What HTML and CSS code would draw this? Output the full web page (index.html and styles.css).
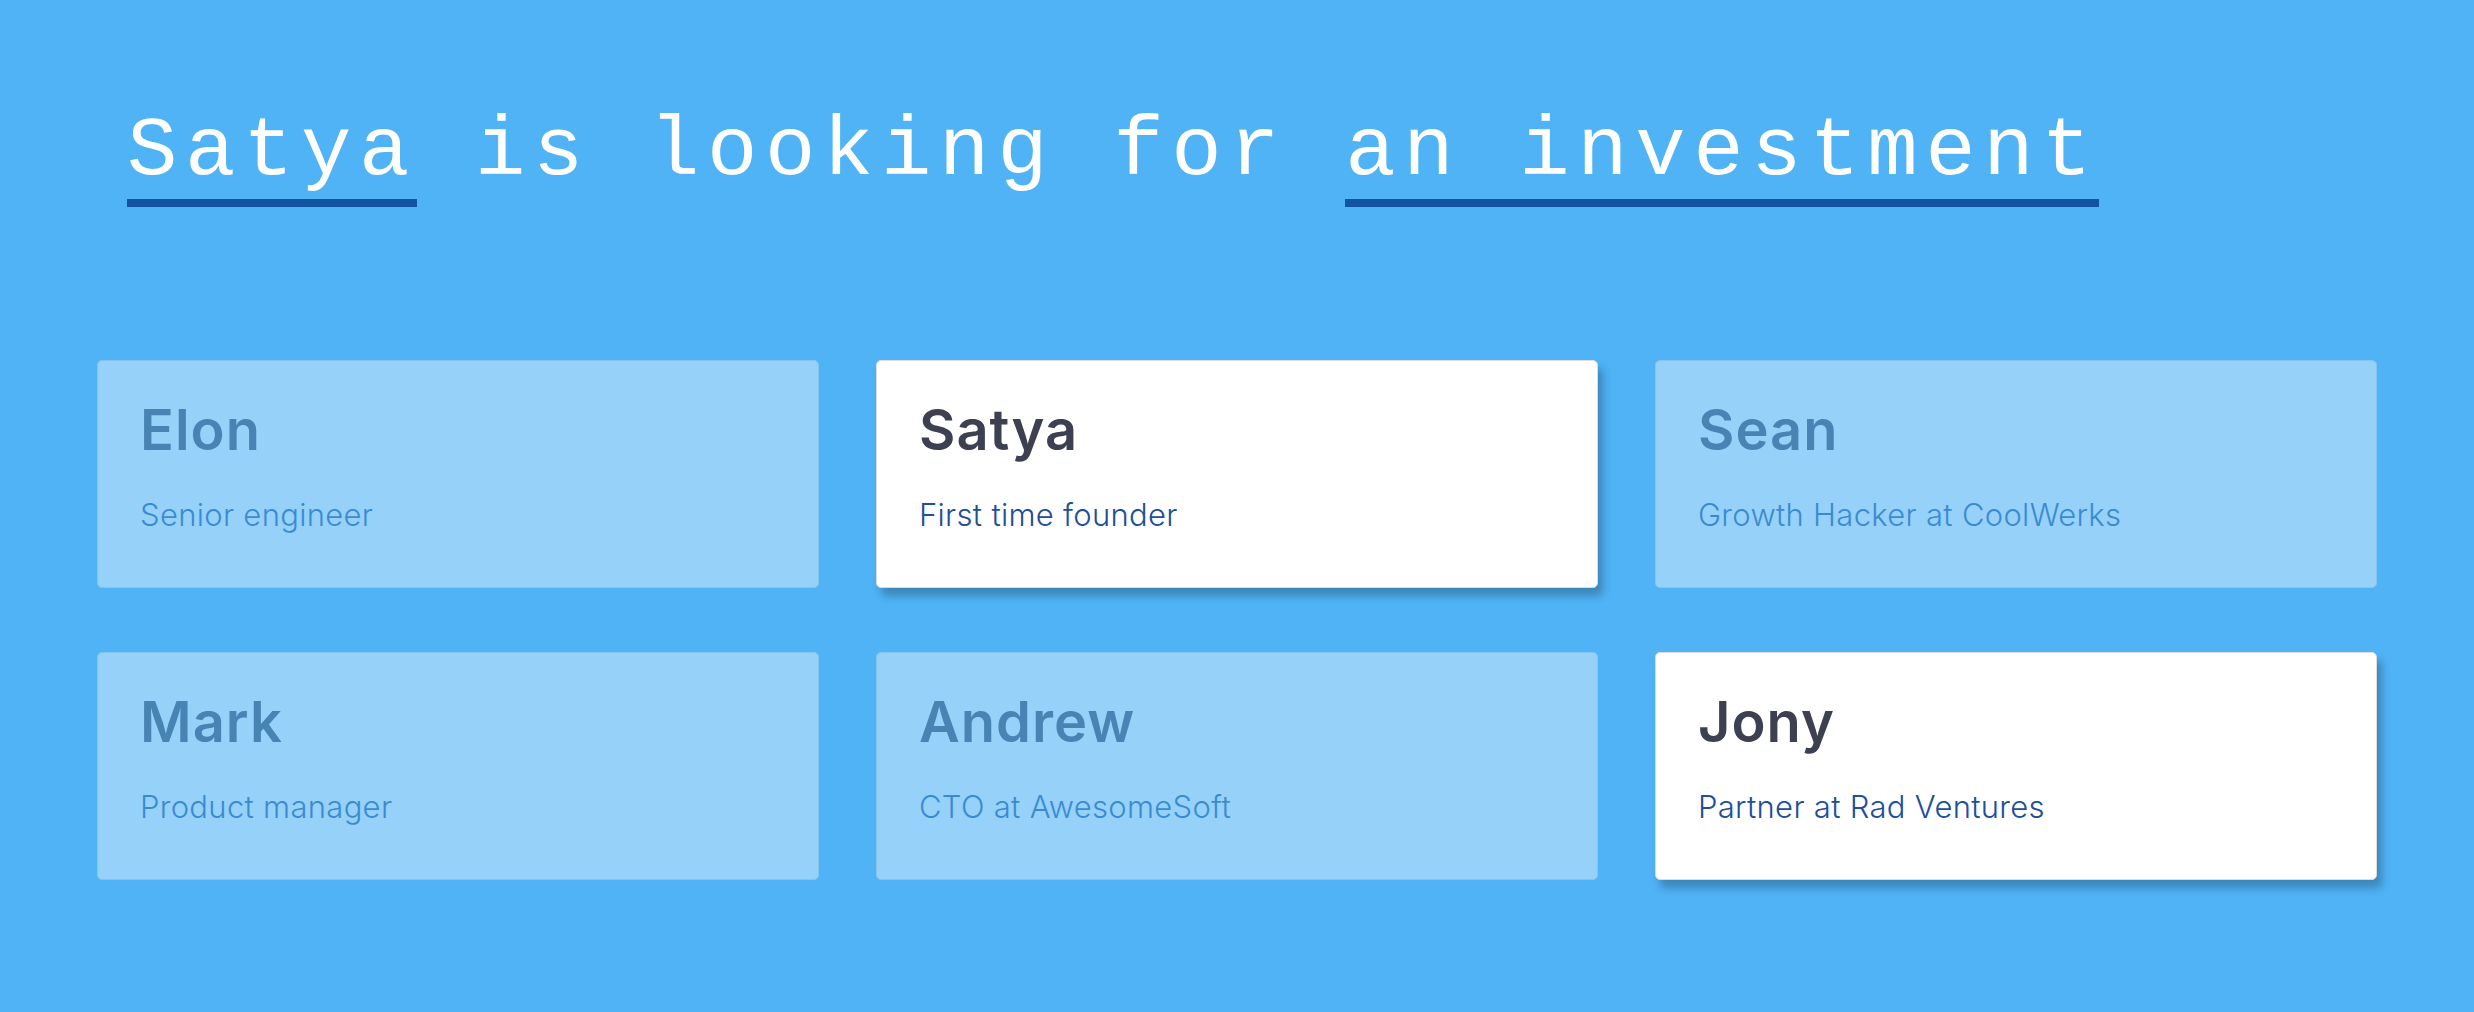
FILE: index.html
```html
<!DOCTYPE html>
<html>
<head>
<meta charset="utf-8">
<link rel="stylesheet" href="styles.css">
</head>
<body>
<main class="page">
  <h1 class="headline"><span class="slot">Satya</span> is looking for <span class="slot">an investment</span></h1>
  <section class="grid">
    <div class="card faded"><div class="name">Elon</div><div class="role">Senior engineer</div></div>
    <div class="card"><div class="name">Satya</div><div class="role">First time founder</div></div>
    <div class="card faded"><div class="name">Sean</div><div class="role">Growth Hacker at CoolWerks</div></div>
    <div class="card faded"><div class="name">Mark</div><div class="role">Product manager</div></div>
    <div class="card faded"><div class="name">Andrew</div><div class="role">CTO at AwesomeSoft</div></div>
    <div class="card"><div class="name">Jony</div><div class="role">Partner at Rad Ventures</div></div>
  </section>
</main>
</body>
</html>
```
FILE: styles.css
```css
html, body {
  margin: 0;
  padding: 0;
  background: #4fb3f6;
}
body {
  width: 2474px;
  height: 1012px;
  overflow: hidden;
}
.page {
  width: 2280px;
  margin: 0 auto;
  padding-top: 102px;
}
.headline {
  margin: 0 0 0 30px;
  font-family: "Liberation Mono", monospace;
  font-weight: normal;
  font-size: 84px;
  letter-spacing: 7.6px;
  line-height: 100px;
  color: #ffffff;
  white-space: pre;
}
.slot {
  display: inline-block;
  border-bottom: 8px solid #12559e;
  line-height: 94px;
  padding-bottom: 0;
}
.grid {
  display: grid;
  grid-template-columns: repeat(3, 1fr);
  column-gap: 57px;
  row-gap: 64px;
  margin-top: 153px;
}
.card {
  height: 228px;
  box-sizing: border-box;
  background: #ffffff;
  border: 1px solid #dcdcdc;
  border-radius: 5px;
  padding: 37px 42px 0;
  box-shadow: 5px 8px 8px rgba(0, 0, 0, 0.25);
  font-family: "Inter", "Open Sans", sans-serif;
}
.card.faded {
  opacity: 0.4;
  box-shadow: none;
}
.name {
  font-size: 56px;
  font-weight: 600;
  letter-spacing: 1px;
  color: #3d4050;
  line-height: 64px;
}
.role {
  margin-top: 33px;
  font-size: 31px;
  font-weight: 300;
  letter-spacing: 0.3px;
  color: #1d4f9a;
  line-height: 40px;
}
```
